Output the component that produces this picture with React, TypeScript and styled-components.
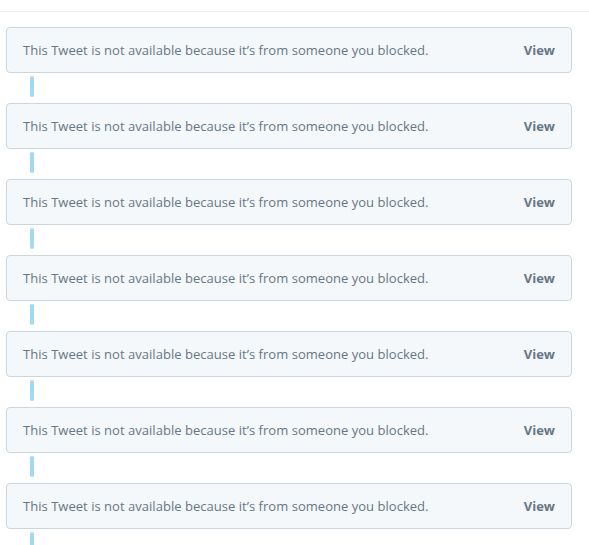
import React from "react";
import styled, { createGlobalStyle } from "styled-components";

const Global = createGlobalStyle`
  html, body { margin: 0; padding: 0; background: #ffffff; }
  body { font-family: "Open Sans", "Noto Sans", sans-serif; overflow: hidden; }
`;

const Page = styled.div`
  width: 589px;
  height: 545px;
  overflow: hidden;
  padding-top: 11px;
  box-sizing: border-box;
`;

const TopRule = styled.div`
  height: 1px;
  background: #e6ecf0;
`;

const Thread = styled.div`
  display: flex;
  flex-direction: column;
  padding: 15px 17px 0 6px;
`;

const Item = styled.div`
  display: flex;
  flex-direction: column;
`;

const Card = styled.div`
  height: 44px;
  box-sizing: content-box;
  border: 1px solid #ccd6dd;
  border-radius: 4px;
  background: #f5f8fa;
  display: flex;
  align-items: center;
  justify-content: space-between;
  padding: 0 16px 0 16px;
`;

const Message = styled.span`
  font-size: 13px;
  color: #657786;
  letter-spacing: 0.03px;
`;

const ViewLink = styled.span`
  font-size: 13px;
  font-weight: 700;
  color: #657786;
`;

const Connector = styled.div`
  width: 4px;
  height: 21px;
  margin: 3px 0 6px 24px;
  border-radius: 2px;
  background: #a4d8f7;
`;

export default function App() {
  const items = Array.from({ length: 7 });
  return (
    <>
      <Global />
      <Page>
        <TopRule />
        <Thread>
          {items.map((_, i) => (
            <Item key={i}>
              <Card>
                <Message>
                  This Tweet is not available because it’s from someone you blocked.
                </Message>
                <ViewLink>View</ViewLink>
              </Card>
              <Connector />
            </Item>
          ))}
        </Thread>
      </Page>
    </>
  );
}
